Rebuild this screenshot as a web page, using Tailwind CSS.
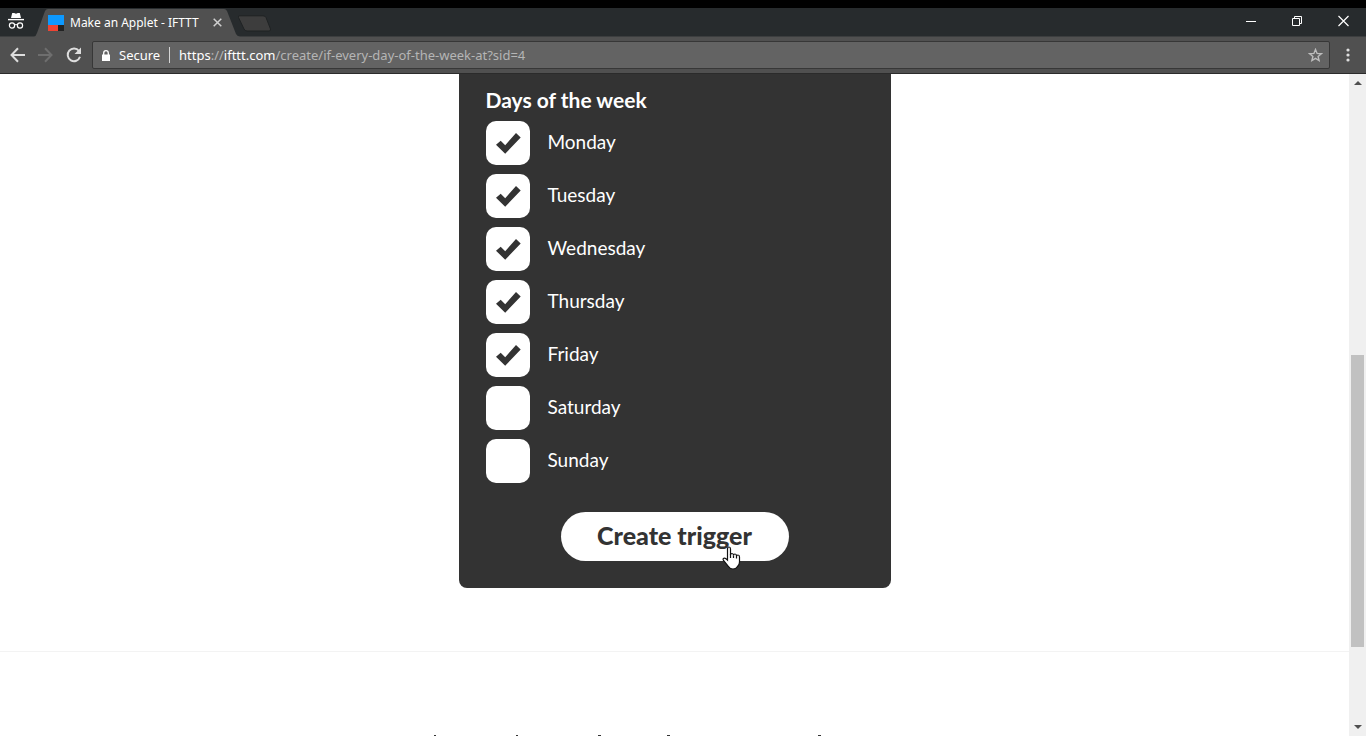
<!DOCTYPE html>
<html lang="en">
<head>
<meta charset="utf-8">
<title>Make an Applet - IFTTT</title>
<script src="https://cdn.jsdelivr.net/npm/@tailwindcss/browser@4"></script>
</head>
<body class="relative flex h-screen flex-col overflow-hidden bg-white font-['Lato',sans-serif]">
<header class="shrink-0 border-b border-[#2b2b2b] bg-[#505050] font-['Noto_Sans',sans-serif] text-white">
  <div class="h-2 bg-black"></div>
  <div class="flex h-[29px] border-b border-[#3c3e3f] bg-[#272b2d]">
    <div class="flex w-[34px] justify-center pt-[5px] pr-[2px]">
      <svg width="16" height="17" viewBox="0 0 16 17" fill="none"><path d="M4.2 0h2l1.8.8L9.8 0h2L13 5H3z" fill="#fff"/><path d="M0 6.6h16" stroke="#fff" stroke-width="1.4"/><circle cx="4" cy="12.5" r="2.6" stroke="#fff" stroke-width="1.2"/><circle cx="12" cy="12.5" r="2.6" stroke="#fff" stroke-width="1.2"/><path d="M6.5 12q1.5-1 3 0" stroke="#fff"/></svg>
    </div>
    <div class="relative h-[29px] w-[203px]">
      <svg class="absolute inset-0" width="206" height="29" viewBox="0 0 206 29"><path d="M0 29Q2 28 3 25L11 3Q12 1 14 1H190Q192 1 193 3L202 26Q203 28 206 29Z" fill="#505050"/></svg>
      <div class="relative flex h-[29px] items-center pl-[14px]">
        <svg width="16" height="16" viewBox="0 0 16 16"><path fill="#0d99ff" d="M0 0h16v11H0z"/><path fill="#ee4433" d="M0 10h10v6H0z"/><path fill="#222" d="M10 10h6v6h-6z"/></svg>
        <span class="ml-[6px] w-[143px] text-[12px] leading-4 whitespace-nowrap">Make an Applet - IFTTT</span>
        <button type="button" aria-label="Close tab"><svg width="9" height="9" viewBox="0 0 9 9"><path d="M.7.7l7.6 7.6M8.3.7L.7 8.3" stroke="#d0d0d0" stroke-width="1.5"/></svg></button>
      </div>
    </div>
    <button type="button" aria-label="New tab" class="flex pt-[7px]"><svg width="35" height="17" viewBox="0 0 35 17"><path d="M2.500 .8H26Q28 .8 29 2.500L33.500 14Q34 16 32 16H10Q8 16 7 14L1.500 2.500Q1 .8 2.500 .8Z" fill="#3d3d3d" stroke="#1f2223"/></svg></button>
    <div class="ml-auto flex items-start gap-9 pt-[7px] pr-[17px]">
      <button type="button" aria-label="Minimize"><svg width="10" height="12" viewBox="0 0 10 12"><path d="M0 6.5h10" stroke="#fff"/></svg></button>
      <button type="button" aria-label="Restore"><svg width="10" height="12" viewBox="0 0 10 12" fill="none" stroke="#fff"><path d="M.5 3.5h7v7h-7zM2.5 3.5v-2h7v7h-2"/></svg></button>
      <button type="button" aria-label="Close"><svg width="11" height="12" viewBox="0 0 11 12"><path d="M.5 1l10 10M10.500 1l-10 10" stroke="#fff" stroke-width="1.2"/></svg></button>
    </div>
  </div>
  <div class="flex h-9 items-center pl-[10px]">
    <nav class="flex w-[82px] gap-[13px]">
      <button type="button" aria-label="Back"><svg width="15" height="16" viewBox="0 0 15 16" fill="none" stroke="#dedede" stroke-width="2"><path d="M15 8H2M8 1.200L1.500 8 8 14.800"/></svg></button>
      <button type="button" aria-label="Forward"><svg width="15" height="16" viewBox="0 0 15 16" fill="none" stroke="#6e6e6e" stroke-width="2"><path d="M0 8h13M7 1.200L13.500 8 7 14.800"/></svg></button>
      <button type="button" aria-label="Reload"><svg width="16" height="16" viewBox="0 0 16 16" fill="none"><path d="M13 4A6.300 6.300 0 1 0 14 9.800" stroke="#dedede" stroke-width="2"/><path d="M15 .5V7H8.500z" fill="#dedede"/></svg></button>
    </nav>
    <div class="flex h-7 flex-1 items-center rounded-[2px] border border-[#373737] bg-[#636363] pr-[6px] pl-[9px] text-[13px] leading-5">
      <svg width="8" height="11" viewBox="0 0 8 11"><path d="M0 4.500h8V11H0z" fill="#fff"/><path d="M1.700 5V3a2.300 2.300 0 0 1 4.600 0v2" fill="none" stroke="#fff" stroke-width="1.300"/></svg>
      <span class="ml-[9px] w-[50px]">Secure</span>
      <span class="h-4 w-px bg-[#d5d5d5]"></span>
      <span class="ml-[9px] flex-1 whitespace-nowrap text-[#b5b5b5]"><span class="text-white">https</span>://<span class="text-white">ifttt.com</span>/create/if-every-day-of-the-week-at?sid=4</span>
      <button type="button" aria-label="Bookmark"><svg width="15" height="14" viewBox="0 0 15 14"><path d="M7.500 1.500l1.600 3.900 4.200.3-3.200 2.700 1 4.100-3.600-2.200-3.600 2.200 1-4.100L1.700 5.700l4.200-.3z" fill="none" stroke="#bdbdbd" stroke-width="1.400"/></svg></button>
    </div>
    <button type="button" aria-label="Menu" class="flex w-9 justify-center"><svg width="4" height="14" viewBox="0 0 4 14" fill="#dedede"><circle cx="2" cy="2" r="1.600"/><circle cx="2" cy="7" r="1.600"/><circle cx="2" cy="12" r="1.600"/></svg></button>
  </div>
</header>
<div class="flex min-h-0 flex-1">
  <main class="flex min-w-0 flex-1 flex-col">
    <form class="relative mx-auto w-[432px] rounded-b-lg bg-[#333] px-[27px] pt-[13px] pb-[27px] text-white">
      <fieldset>
        <legend class="pb-2 text-[21px] leading-[26px] font-bold">Days of the week</legend>
        <div class="flex flex-col gap-[9px] text-[19px] leading-6">
          <label class="flex h-11 items-center gap-[18px]"><span class="grid size-11"><input type="checkbox" checked class="peer col-start-1 row-start-1 size-11 appearance-none rounded-[10px] bg-white"><svg class="invisible col-start-1 row-start-1 place-self-center peer-checked:visible" width="26" height="22" viewBox="0 0 26 22"><path d="M1 12.700L5.700 8.700L10.200 13.300L21 1L25.700 5.500L10.200 21.700z" fill="#333"/></svg></span><span class="pb-[2px]">Monday</span></label>
          <label class="flex h-11 items-center gap-[18px]"><span class="grid size-11"><input type="checkbox" checked class="peer col-start-1 row-start-1 size-11 appearance-none rounded-[10px] bg-white"><svg class="invisible col-start-1 row-start-1 place-self-center peer-checked:visible" width="26" height="22" viewBox="0 0 26 22"><path d="M1 12.700L5.700 8.700L10.200 13.300L21 1L25.700 5.500L10.200 21.700z" fill="#333"/></svg></span><span class="pb-[2px]">Tuesday</span></label>
          <label class="flex h-11 items-center gap-[18px]"><span class="grid size-11"><input type="checkbox" checked class="peer col-start-1 row-start-1 size-11 appearance-none rounded-[10px] bg-white"><svg class="invisible col-start-1 row-start-1 place-self-center peer-checked:visible" width="26" height="22" viewBox="0 0 26 22"><path d="M1 12.700L5.700 8.700L10.200 13.300L21 1L25.700 5.500L10.200 21.700z" fill="#333"/></svg></span><span class="pb-[2px]">Wednesday</span></label>
          <label class="flex h-11 items-center gap-[18px]"><span class="grid size-11"><input type="checkbox" checked class="peer col-start-1 row-start-1 size-11 appearance-none rounded-[10px] bg-white"><svg class="invisible col-start-1 row-start-1 place-self-center peer-checked:visible" width="26" height="22" viewBox="0 0 26 22"><path d="M1 12.700L5.700 8.700L10.200 13.300L21 1L25.700 5.500L10.200 21.700z" fill="#333"/></svg></span><span class="pb-[2px]">Thursday</span></label>
          <label class="flex h-11 items-center gap-[18px]"><span class="grid size-11"><input type="checkbox" checked class="peer col-start-1 row-start-1 size-11 appearance-none rounded-[10px] bg-white"><svg class="invisible col-start-1 row-start-1 place-self-center peer-checked:visible" width="26" height="22" viewBox="0 0 26 22"><path d="M1 12.700L5.700 8.700L10.200 13.300L21 1L25.700 5.500L10.200 21.700z" fill="#333"/></svg></span><span class="pb-[2px]">Friday</span></label>
          <label class="flex h-11 items-center gap-[18px]"><input type="checkbox" class="size-11 appearance-none rounded-[10px] bg-white"><span class="pb-[2px]">Saturday</span></label>
          <label class="flex h-11 items-center gap-[18px]"><input type="checkbox" class="size-11 appearance-none rounded-[10px] bg-white"><span class="pb-[2px]">Sunday</span></label>
        </div>
      </fieldset>
      <button type="button" class="mx-auto mt-[29px] block h-[49px] w-[228px] rounded-full bg-white pb-[3px] text-[25px] leading-7 font-black text-[#333]">Create trigger</button>
      <svg class="absolute top-[472px] left-[263px]" width="19" height="24" viewBox="0 0 19 24"><path d="M5.500 14V3Q5.500 1 7 1T8.500 3V9Q8.500 7.500 10 7.500T11.500 9.500Q11.500 8 13 8T14.500 10Q14.500 9 16 9T17.500 11V16Q17.500 19 15.500 20.500Q14 23 11 23Q8 23 6.500 20.500L1.500 14.500Q.5 13 1.800 12.300T5.500 14Z" fill="#fff" stroke="#111" stroke-width="1.200"/><path d="M8.500 8v4M11.500 9.500V12M14.500 10V12.500" stroke="#111" stroke-width="1.200"/></svg>
    </form>
    <hr class="mt-[63px] border-[#f3f3f3]">
    <svg class="mx-auto mt-auto shrink-0" width="482" height="1" viewBox="0 0 482 1" fill="#333" aria-hidden="true"><path d="M0 0h2v1H0zM82 0h2v1h-2zM164 0h3v1h-3zM233 0h3v1h-3zM384 0h3v1h-3z"/></svg>
  </main>
  <div class="flex w-[17px] flex-col items-center bg-[#f0f0f0] py-[7px]" aria-hidden="true">
    <svg width="8" height="4" viewBox="0 0 8 4"><path d="M0 4L4 0l4 4z" fill="#505050"/></svg>
    <div class="flex w-full flex-1 flex-col px-[2px]">
      <div class="grow-[270]"></div><div class="grow-[292] bg-[#c1c1c1]"></div><div class="grow-[78]"></div>
    </div>
    <svg width="8" height="4" viewBox="0 0 8 4"><path d="M0 0h8L4 4z" fill="#505050"/></svg>
  </div>
</div>
</body>
</html>
